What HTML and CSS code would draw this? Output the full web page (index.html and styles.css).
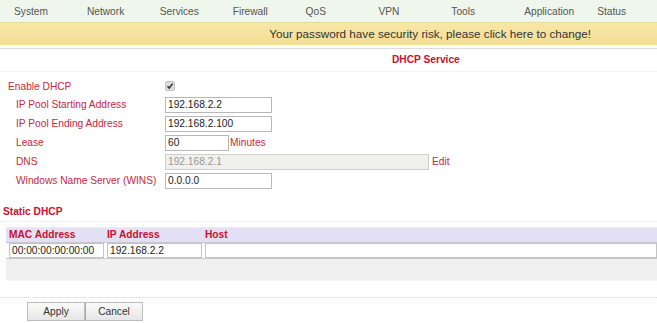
FILE: index.html
```html
<!DOCTYPE html>
<html>
<head>
<meta charset="utf-8">
<link rel="stylesheet" href="styles.css">
</head>
<body>
<div class="nav">
  <span class="nav-item">System</span>
  <span class="nav-item">Network</span>
  <span class="nav-item">Services</span>
  <span class="nav-item">Firewall</span>
  <span class="nav-item">QoS</span>
  <span class="nav-item">VPN</span>
  <span class="nav-item">Tools</span>
  <span class="nav-item">Application</span>
  <span class="nav-item">Status</span>
</div>
<div class="banner">Your password have security risk, please click here to change!</div>
<div class="rule"></div>
<div class="title">DHCP Service</div>
<div class="faint"></div>
<div class="form">
  <div class="row top">
    <span class="label">Enable DHCP</span>
    <span class="field"><span class="check"><svg width="8" height="8" viewBox="0 0 8 8"><path d="M1.5 4.2 L3.2 6 L6.6 1.8" fill="none" stroke="#333" stroke-width="1.5"/></svg></span></span>
  </div>
  <div class="row">
    <span class="label sub">IP Pool Starting Address</span>
    <span class="field"><span class="input w107">192.168.2.2</span></span>
  </div>
  <div class="row">
    <span class="label sub">IP Pool Ending Address</span>
    <span class="field"><span class="input w107">192.168.2.100</span></span>
  </div>
  <div class="row">
    <span class="label sub">Lease</span>
    <span class="field"><span class="input w64">60</span><span class="unit">Minutes</span></span>
  </div>
  <div class="row">
    <span class="label sub">DNS</span>
    <span class="field"><span class="input w264 disabled">192.168.2.1</span><span class="unit edit">Edit</span></span>
  </div>
  <div class="row">
    <span class="label sub">Windows Name Server (WINS)</span>
    <span class="field"><span class="input w107">0.0.0.0</span></span>
  </div>
</div>
<div class="section">Static DHCP</div>
<div class="faint"></div>
<div class="table">
  <div class="thead">
    <span class="th c1">MAC Address</span>
    <span class="th c2">IP Address</span>
    <span class="th c3">Host</span>
  </div>
  <div class="trow">
    <span class="cell c1"><span class="tinput">00:00:00:00:00:00</span></span>
    <span class="cell c2"><span class="tinput">192.168.2.2</span></span>
    <span class="cell c3"><span class="tinput"></span></span>
  </div>
  <div class="tfoot"></div>
</div>
<div class="dotted"></div>
<div class="buttons">
  <span class="btn">Apply</span><span class="btn">Cancel</span>
</div>
</body>
</html>
```

FILE: styles.css
```css
* { box-sizing: border-box; }
html, body { margin: 0; padding: 0; background: #fff; }
body {
  width: 657px;
  height: 323px;
  overflow: hidden;
  font-family: "Liberation Sans", Arial, sans-serif;
  font-size: 10.2px;
  color: #333;
}
.nav {
  height: 22px;
  background: #eff6ec;
  display: flex;
  padding-left: 14px;
  align-items: center;
}
.nav-item {
  width: 72.9px;
  flex: none;
  color: #555;
  font-size: 10.2px;
}
.banner {
  height: 23px;
  background: linear-gradient(#f7e7a8, #f4de95);
  border-top: 1px solid #eadb9c;
  color: #333;
  font-size: 11.7px;
  text-align: right;
  padding-right: 66px;
  line-height: 21px;
}
.rule {
  margin-top: 3px;
  height: 1px;
  background: #dcdcdc;
}
.title {
  height: 22px;
  line-height: 21px;
  padding-left: 392px;
  color: #c8102e;
  font-weight: bold;
}
.faint {
  height: 1px;
  background: #f3f3f3;
}
.form {
  padding-top: 5px;
}
.row {
  display: flex;
  align-items: center;
  height: 19px;
}
.row.top { height: 18px; }
.label {
  width: 165px;
  flex: none;
  color: #c8283c;
  padding-left: 8px;
}
.label.sub { padding-left: 16px; }
.field {
  display: flex;
  align-items: center;
}
.check {
  width: 10px;
  height: 10px;
  background: #dcdcdc;
  border: 1px solid #c4c4c4;
  border-radius: 2px;
  display: flex;
  align-items: center;
  justify-content: center;
}
.input {
  height: 16px;
  border: 1px solid #b8b8b8;
  background: #fff;
  color: #222;
  line-height: 14px;
  padding-left: 2px;
}
.w107 { width: 107px; }
.w64 { width: 64px; }
.w264 { width: 264px; }
.input.disabled {
  background: #f0f0ec;
  color: #999;
  border-color: #cfcfcf;
}
.unit {
  color: #c8283c;
  padding-left: 1px;
}
.unit.edit { padding-left: 3px; }
.section {
  margin-top: 12px;
  padding-left: 3px;
  height: 19px;
  line-height: 19px;
  color: #c8102e;
  font-weight: bold;
}
.table {
  margin-top: 5px;
  margin-left: 6px;
  border-top: 1px solid #eeeeee;
}
.thead {
  display: flex;
  height: 15px;
  background: #e3e0f6;
  border-bottom: 1px solid #c8c8c8;
  line-height: 14px;
}
.th {
  color: #c8102e;
  font-weight: bold;
  padding-left: 3px;
}
.c1 { width: 98px; flex: none; }
.c2 { width: 98px; flex: none; }
.c3 { flex: 1; }
.trow {
  display: flex;
  height: 16px;
  border-bottom: 1px solid #c8c8c8;
  background: #fff;
  padding-left: 3px;
}
.cell { padding-right: 3px; }
.cell.c3 { padding-right: 0; }
.tinput {
  display: block;
  height: 15px;
  border: 1px solid #c4c4c4;
  line-height: 13px;
  padding-left: 2px;
  color: #222;
  background: #fff;
}
.tfoot {
  height: 22px;
  background: #f0f0f0;
  border-bottom: 1px solid #f6f6f6;
}
.dotted {
  margin-top: 16px;
  border-top: 1px dotted #d8d8d8;
}
.buttons {
  margin-top: 4px;
  padding-left: 27px;
  display: flex;
}
.btn {
  width: 58px;
  height: 19px;
  border: 1px solid #bdbdbd;
  background: linear-gradient(#fafafa, #e6e6e6);
  text-align: center;
  line-height: 17px;
  color: #333;
}
.btn + .btn { border-left: 1px solid #aaa; }
```
